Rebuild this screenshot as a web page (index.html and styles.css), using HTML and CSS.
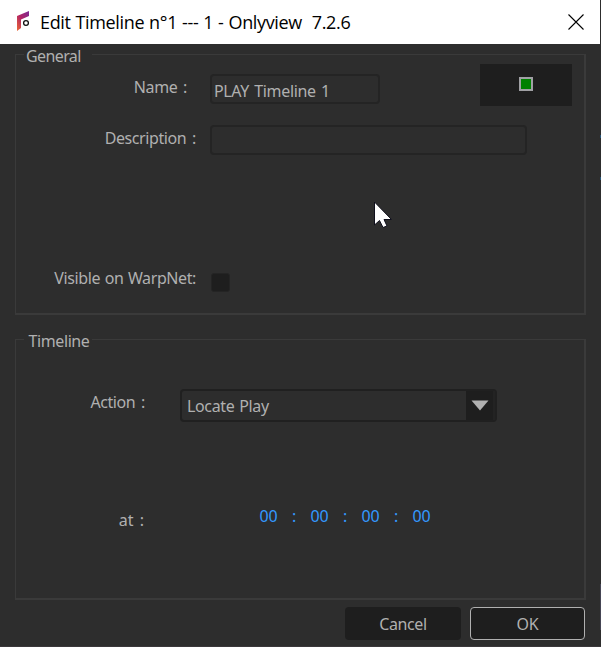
FILE: index.html
```html
<!DOCTYPE html>
<html lang="en">
<head>
<meta charset="utf-8">
<title>Edit Timeline</title>
<link rel="stylesheet" href="styles.css">
</head>
<body>
<div class="window">
  <header class="titlebar">
    <svg class="logo" width="14" height="22" viewBox="0 0 14 22">
      <defs><linearGradient id="lg" x1="1" y1="0" x2="0" y2="1"><stop offset="0" stop-color="#7b2a93"/><stop offset=".5" stop-color="#b02366"/><stop offset="1" stop-color="#ef6a32"/></linearGradient></defs>
      <path d="M12 1V6L4 9.500V18L0 21V6Z" fill="url(#lg)"/>
      <circle cx="9" cy="13" r="2.4" fill="#fff" stroke="#111" stroke-width="1.3"/>
    </svg>
    <h1 class="title">Edit Timeline n°1 --- 1 - Onlyview&nbsp; 7.2.6</h1>
    <svg class="close" width="16" height="16" viewBox="0 0 16 16"><path d="M.5.5l15 15M15.500.5l-15 15" stroke="#000" stroke-width="1.1"/></svg>
  </header>
  <main class="content">
    <section class="group general">
      <h2 class="legend"><span class="general-text">General</span></h2>
      <div class="row name-row">
        <span class="label"><span class="name-text">Name :</span></span>
        <div class="field name-field"><span class="play-text">PLAY Timeline 1</span></div>
        <div class="swatch"><i class="green"></i></div>
      </div>
      <div class="row desc-row">
        <span class="label"><span class="desc-text">Description :</span></span>
        <div class="field desc-field"></div>
      </div>
      <div class="row visible-row">
        <span class="label"><span class="visible-text">Visible on WarpNet:</span></span>
        <i class="checkbox"></i>
      </div>
    </section>
    <section class="group timeline">
      <h2 class="legend"><span class="timeline-text">Timeline</span></h2>
      <div class="row action-row">
        <span class="label"><span class="action-text">Action :</span></span>
        <div class="combo"><span class="locate-text">Locate Play</span>
          <span class="arrow"><svg width="18" height="11" viewBox="0 0 18 11"><path d="M.5.500H17.500L9 10.500Z" fill="#b0b0b0"/></svg></span>
        </div>
      </div>
      <div class="row at-row">
        <span class="label"><span class="at-text">at :</span></span>
        <div class="time"><span>00</span><b>:</b><span>00</span><b>:</b><span>00</span><b>:</b><span>00</span></div>
      </div>
    </section>
    <footer class="buttons">
      <div class="button"><span class="cancel-text">Cancel</span></div>
      <div class="button ok"><span class="ok-text">OK</span></div>
    </footer>
  </main>
  <svg class="cursor" width="19" height="28" viewBox="0 0 19 28"><path d="M.5 1V24L5.500 19.500L9 26.500L13 25L10 18.500H17.500Z" fill="#fff" stroke="#10101c"/></svg>
  <i class="edge edge-a"></i><i class="edge edge-b"></i><i class="edge edge-c"></i>
</div>
</body>
</html>
```
FILE: styles.css
```css
* { box-sizing: border-box; }
body { margin: 0; background: #2d2d2d; }
.window { position: relative; width: 601px; height: 647px; overflow: hidden; background: #2d2d2d; color: #b0b0b0; font: 16px/20px "Noto Sans", sans-serif; border-bottom: 1px solid #3b383b; }
.titlebar { display: flex; width: 600px; height: 44px; background: #fff; color: #000; }
.logo { margin: 10px 0 0 17px; flex: none; }
.title { margin: 10px 0 0 9px; font: 400 18px/24px "Open Sans", sans-serif; letter-spacing: -0.35px; word-spacing: 0.6px; white-space: nowrap; }
.close { margin: 14px 16.5px 0 auto; flex: none; }
.content { padding: 10px 15px 0; }
.group { width: 571px; border: solid #3a3a3a; border-width: 1px 2px 2px 1px; }
.general { height: 261px; }
.timeline { height: 261px; margin-top: 24px; }
.legend { width: 68px; height: 20px; margin: -9px 0 0 8px; padding-left: 2px; background: #2d2d2d; font: inherit; white-space: nowrap; }
.timeline .legend { padding-left: 4.5px; }
.row { display: flex; align-items: flex-start; }
.label { flex: none; width: 181px; padding-right: 1px; text-align: right; white-space: nowrap; word-spacing: 2px; }
.field { height: 30px; margin-left: 13px; border: 2px solid #242424; border-radius: 4px; white-space: nowrap; }
.name-row { height: 52px; margin-top: -2px; }
.name-row .label { width: 172px; padding-top: 13px; }
.name-field { width: 170px; margin: 10px 0 0 22px; padding: 5px 0 0 2px; }
.swatch { display: flex; justify-content: center; width: 92px; height: 42px; margin-left: 100px; padding-top: 13px; background: #1e1e1e; }
.green { width: 14px; height: 14px; background: #008000; border: 2px solid #a0a0a4; }
.desc-row { height: 30px; margin-top: 9px; }
.desc-row .label { padding-top: 3px; }
.desc-field { width: 317px; }
.visible-row { margin-top: 113px; }
.checkbox { width: 19px; height: 19px; margin: 5px 0 0 14px; background: #1e1e1e; border: 1px solid #242424; border-radius: 3px; }
.action-row { margin-top: 38px; }
.action-row .label, .at-row .label { width: 130px; padding-top: 3px; }
.combo { display: flex; width: 317px; height: 33px; margin-left: 34px; padding-left: 5px; border: 2px solid #202020; border-radius: 4px; line-height: 31px; }
.arrow { display: flex; width: 29px; margin-left: auto; padding: 9px 0 0 5px; background: #1e1e1e; border-right: 2px solid #232323; }
.at-row { margin-top: 84px; }
.at-row .label { width: 129px; padding-top: 4px; }
.time { display: flex; margin-left: 113.5px; color: #3399ff; letter-spacing: -0.1px; }
.time span { width: 20px; text-align: center; }
.time b { width: 31px; text-align: center; font-weight: 400; }
.buttons { display: flex; gap: 9px; justify-content: flex-end; width: 570px; margin-top: 7px; }
.button { width: 116px; height: 33px; border-radius: 4px; background: #1e1e1e; text-align: center; line-height: 34px; }
.ok { width: 115px; border: 1.5px solid #b0b0b0; line-height: 32px; }
.cursor { position: absolute; left: 374px; top: 201px; }
.edge { position: absolute; left: 600px; width: 1px; height: 3px; background: #285475; }
.edge-a { top: 135px; }
.edge-b { top: 177px; }
.edge-c { top: 584px; height: 46px; background: #454554; }
.general-text { letter-spacing: -0.6px; }
.name-text, .timeline-text { letter-spacing: -0.4px; }
.desc-text, .cancel-text { letter-spacing: -0.4px; }
.visible-text { letter-spacing: -0.4px; word-spacing: 0.8px; }
.play-text { letter-spacing: -0.35px; word-spacing: 1.5px; }
.action-text { letter-spacing: -0.4px; }
.locate-text { letter-spacing: -0.35px; word-spacing: 1px; }
.ok-text { letter-spacing: -0.3px; }
```
